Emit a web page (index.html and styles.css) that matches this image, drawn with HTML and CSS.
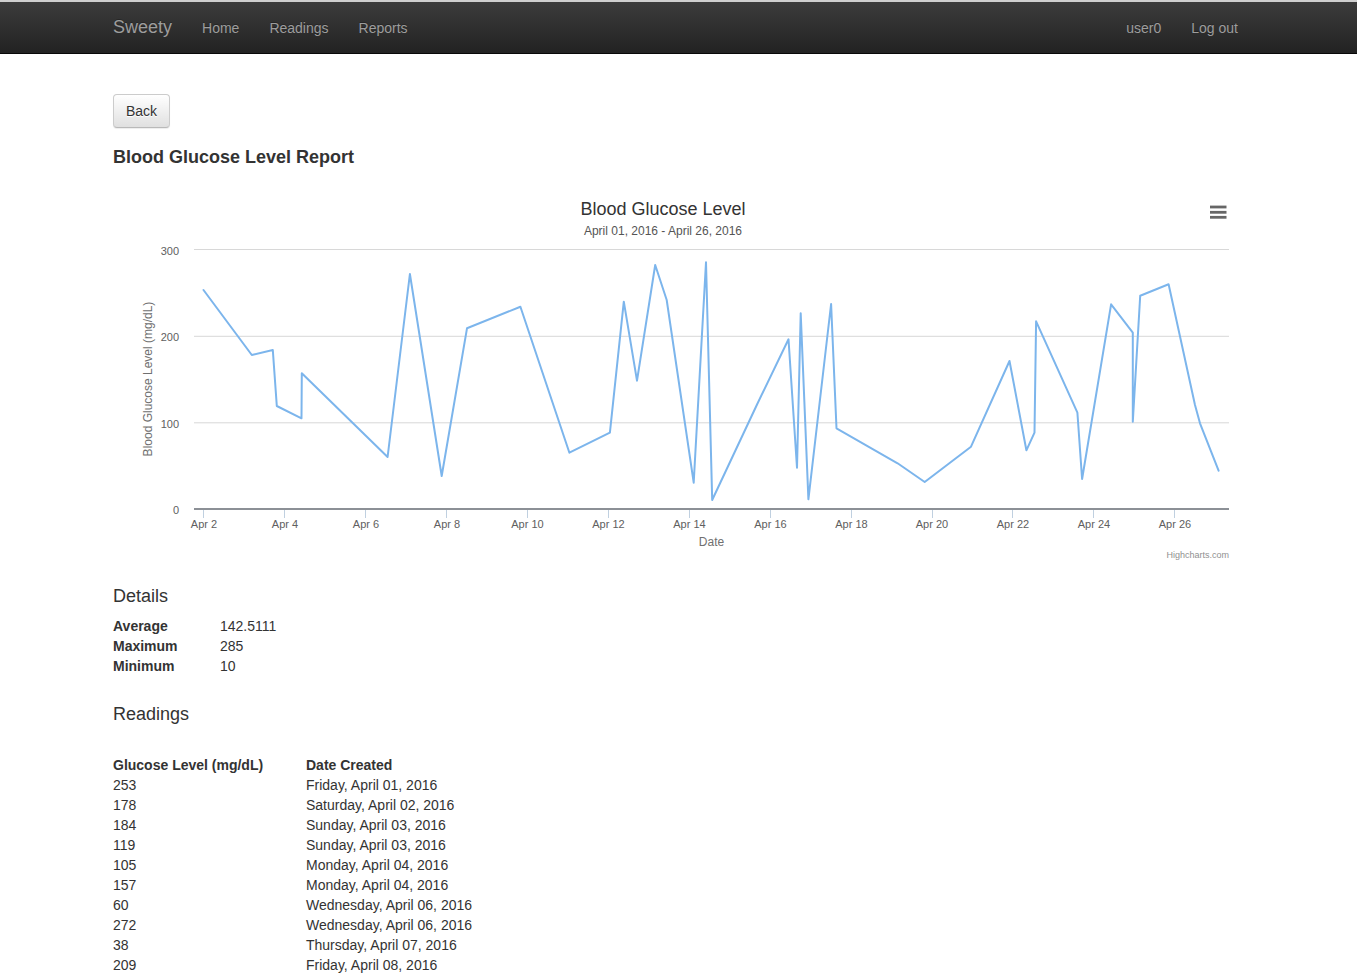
FILE: index.html
```
<!DOCTYPE html>
<html lang="en">
<head>
<meta charset="utf-8">
<title>Sweety - Blood Glucose Level Report</title>
<link rel="stylesheet" href="styles.css">
</head>
<body>
<nav class="navbar">
  <div class="container nav-inner">
    <a class="brand" href="#">Sweety</a>
    <ul class="nav">
      <li><a href="#">Home</a></li>
      <li><a href="#">Readings</a></li>
      <li><a href="#">Reports</a></li>
    </ul>
    <ul class="nav nav-right">
      <li><a href="#">user0</a></li>
      <li><a href="#">Log out</a></li>
    </ul>
  </div>
</nav>

<main class="container main">
  <button class="btn" type="button">Back</button>
  <h4 class="report-title">Blood Glucose Level Report</h4>

  <div class="chart">
    <svg class="chart-svg" width="1131" height="385" viewBox="113 185 1131 385" xmlns="http://www.w3.org/2000/svg">
      <text x="663" y="214.5" class="c-title" text-anchor="middle">Blood Glucose Level</text>
      <text x="663" y="235" class="c-subtitle" text-anchor="middle">April 01, 2016 - April 26, 2016</text>
      <g class="c-menu">
        <line x1="1210" y1="207" x2="1226.5" y2="207"/>
        <line x1="1210" y1="212.3" x2="1226.5" y2="212.3"/>
        <line x1="1210" y1="217.3" x2="1226.5" y2="217.3"/>
      </g>
      <g class="c-grid">
        <line x1="194" y1="249.5" x2="1229" y2="249.5"/>
        <line x1="194" y1="336.3" x2="1229" y2="336.3"/>
        <line x1="194" y1="422.8" x2="1229" y2="422.8"/>
      </g>
      <g class="c-ticks">
        <line x1="203.5" y1="509" x2="203.5" y2="518"/>
        <line x1="284.5" y1="509" x2="284.5" y2="518"/>
        <line x1="365.5" y1="509" x2="365.5" y2="518"/>
        <line x1="446.5" y1="509" x2="446.5" y2="518"/>
        <line x1="527.5" y1="509" x2="527.5" y2="518"/>
        <line x1="608.5" y1="509" x2="608.5" y2="518"/>
        <line x1="689.5" y1="509" x2="689.5" y2="518"/>
        <line x1="770.5" y1="509" x2="770.5" y2="518"/>
        <line x1="851.5" y1="509" x2="851.5" y2="518"/>
        <line x1="932.5" y1="509" x2="932.5" y2="518"/>
        <line x1="1012.5" y1="509" x2="1012.5" y2="518"/>
        <line x1="1093.5" y1="509" x2="1093.5" y2="518"/>
        <line x1="1174.5" y1="509" x2="1174.5" y2="518"/>
      </g>
      <line class="c-axis" x1="194" y1="509" x2="1229" y2="509"/>
      <g class="c-ylabels" text-anchor="end">
        <text x="179" y="255">300</text>
        <text x="179" y="341">200</text>
        <text x="179" y="427.5">100</text>
        <text x="179" y="514">0</text>
      </g>
      <text class="c-ytitle" x="151.5" y="379" text-anchor="middle" transform="rotate(-90 151.5 379)">Blood Glucose Level (mg/dL)</text>
      <g class="c-xlabels" text-anchor="middle">
        <text x="204" y="528">Apr 2</text>
        <text x="285" y="528">Apr 4</text>
        <text x="366" y="528">Apr 6</text>
        <text x="447" y="528">Apr 8</text>
        <text x="527.5" y="528">Apr 10</text>
        <text x="608.5" y="528">Apr 12</text>
        <text x="689.5" y="528">Apr 14</text>
        <text x="770.5" y="528">Apr 16</text>
        <text x="851.5" y="528">Apr 18</text>
        <text x="932" y="528">Apr 20</text>
        <text x="1013" y="528">Apr 22</text>
        <text x="1094" y="528">Apr 24</text>
        <text x="1175" y="528">Apr 26</text>
      </g>
      <text class="c-xtitle" x="711.5" y="546" text-anchor="middle">Date</text>
      <polyline class="c-series" points="203.5,290 251.8,355 272.8,350 276.8,406 301.5,418.3 301.8,373.3 387.6,457 409.9,274 441.7,476 467,328.3 520.4,306.7 569.4,452.7 609.9,432.7 623.8,301.7 637,380.7 655.2,265 666.7,300 693.7,482.7 706,262.3 712.2,500 757.5,403.5 788.5,339.3 797,467.7 800.7,313.3 808.4,499.3 831.1,304 836.5,428.3 897.6,463.3 924.7,482 971,446.7 1009.5,361 1026.4,450.3 1034.5,432.7 1036.1,321.3 1077.4,412.7 1082.1,479 1111.1,304.3 1132.8,332.7 1132.8,421.7 1140.2,295.7 1168.6,284.3 1195,405 1200,423.3 1218.6,470.7"/>
      <text class="c-credits" x="1229" y="558" text-anchor="end">Highcharts.com</text>
    </svg>
  </div>

  <h4 class="section-title details-title">Details</h4>
  <table class="details">
    <tr><th>Average</th><td>142.5111</td></tr>
    <tr><th>Maximum</th><td>285</td></tr>
    <tr><th>Minimum</th><td>10</td></tr>
  </table>

  <h4 class="section-title readings-title">Readings</h4>
  <table class="readings">
    <thead>
      <tr><th>Glucose Level (mg/dL)</th><th>Date Created</th></tr>
    </thead>
    <tbody>
      <tr><td>253</td><td>Friday, April 01, 2016</td></tr>
      <tr><td>178</td><td>Saturday, April 02, 2016</td></tr>
      <tr><td>184</td><td>Sunday, April 03, 2016</td></tr>
      <tr><td>119</td><td>Sunday, April 03, 2016</td></tr>
      <tr><td>105</td><td>Monday, April 04, 2016</td></tr>
      <tr><td>157</td><td>Monday, April 04, 2016</td></tr>
      <tr><td>60</td><td>Wednesday, April 06, 2016</td></tr>
      <tr><td>272</td><td>Wednesday, April 06, 2016</td></tr>
      <tr><td>38</td><td>Thursday, April 07, 2016</td></tr>
      <tr><td>209</td><td>Friday, April 08, 2016</td></tr>
    </tbody>
  </table>
</main>
</body>
</html>
```

FILE: styles.css
```
* {
  box-sizing: border-box;
}

html, body {
  margin: 0;
  padding: 0;
}

body {
  font-family: "Liberation Sans", Arial, Helvetica, sans-serif;
  font-size: 14px;
  line-height: 20px;
  color: #333;
  background: #fff;
}

a {
  text-decoration: none;
}

.container {
  max-width: 1131px;
  margin: 0 auto;
}

/* Navbar */
.navbar {
  border-top: 2px solid #cfcfcf;
  border-bottom: 1px solid #080808;
  background: linear-gradient(to bottom, #3c3c3c 0%, #222 100%);
}

.nav-inner {
  display: flex;
  align-items: center;
  height: 51px;
}

.brand {
  font-size: 18px;
  line-height: 20px;
  color: #9d9d9d;
  margin-right: 30px;
  text-shadow: 0 -1px 0 rgba(0, 0, 0, .25);
  position: relative;
  top: -1px;
}

.nav {
  display: flex;
  gap: 30px;
  list-style: none;
  margin: 0;
  padding: 0;
}

.nav a {
  color: #9d9d9d;
  font-size: 14px;
  line-height: 20px;
  text-shadow: 0 -1px 0 rgba(0, 0, 0, .25);
}

.nav-right {
  margin-left: auto;
  margin-right: 6px;
}

/* Main */
.main {
  padding-top: 40px;
}

.btn {
  display: block;
  font-family: inherit;
  font-size: 14px;
  line-height: 20px;
  padding: 6px 12px;
  height: 34px;
  color: #333;
  border: 1px solid #ccc;
  border-bottom-color: #b9b9b9;
  border-radius: 4px;
  background: linear-gradient(to bottom, #fff 0%, #e0e0e0 100%);
  text-shadow: 0 1px 0 #fff;
  box-shadow: inset 0 1px 0 rgba(255, 255, 255, .15), 0 1px 1px rgba(0, 0, 0, .075);
  cursor: pointer;
}

.report-title {
  font-size: 18px;
  font-weight: bold;
  line-height: 20px;
  margin: 19px 0 0;
}

.chart {
  margin-top: 18px;
  height: 385px;
}

.chart-svg {
  display: block;
  font-family: "Liberation Sans", Arial, Helvetica, sans-serif;
}

.c-title {
  font-size: 18px;
  fill: #333;
}

.c-subtitle {
  font-size: 12px;
  fill: #555;
}

.c-menu line {
  stroke: #666;
  stroke-width: 2.8;
}

.c-grid line {
  stroke: #d8d8d8;
  stroke-width: 1;
}

.c-ticks line {
  stroke: #c0d0e0;
  stroke-width: 1;
}

.c-axis {
  stroke: #8c9096;
  stroke-width: 2;
}

.c-ylabels text,
.c-xlabels text {
  font-size: 11px;
  fill: #606060;
}

.c-ytitle,
.c-xtitle {
  font-size: 12px;
  fill: #707070;
}

.c-series {
  fill: none;
  stroke: #7cb5ec;
  stroke-width: 2;
  stroke-linejoin: round;
  stroke-linecap: round;
}

.c-credits {
  font-size: 9px;
  fill: #909090;
}

/* Sections */
.section-title {
  font-size: 18px;
  font-weight: normal;
  line-height: 20px;
  margin: 0;
}

.details-title {
  margin-top: 16px;
}

.details {
  border-collapse: collapse;
  margin-top: 10px;
}

.details th,
.details td {
  padding: 0;
  text-align: left;
  vertical-align: top;
}

.details th {
  width: 107px;
  font-weight: bold;
}

.readings-title {
  margin-top: 28px;
}

.readings {
  border-collapse: collapse;
  margin-top: 31px;
}

.readings th,
.readings td {
  padding: 0;
  text-align: left;
}

.readings th:first-child,
.readings td:first-child {
  width: 193px;
}

.readings th {
  font-weight: bold;
}
```
